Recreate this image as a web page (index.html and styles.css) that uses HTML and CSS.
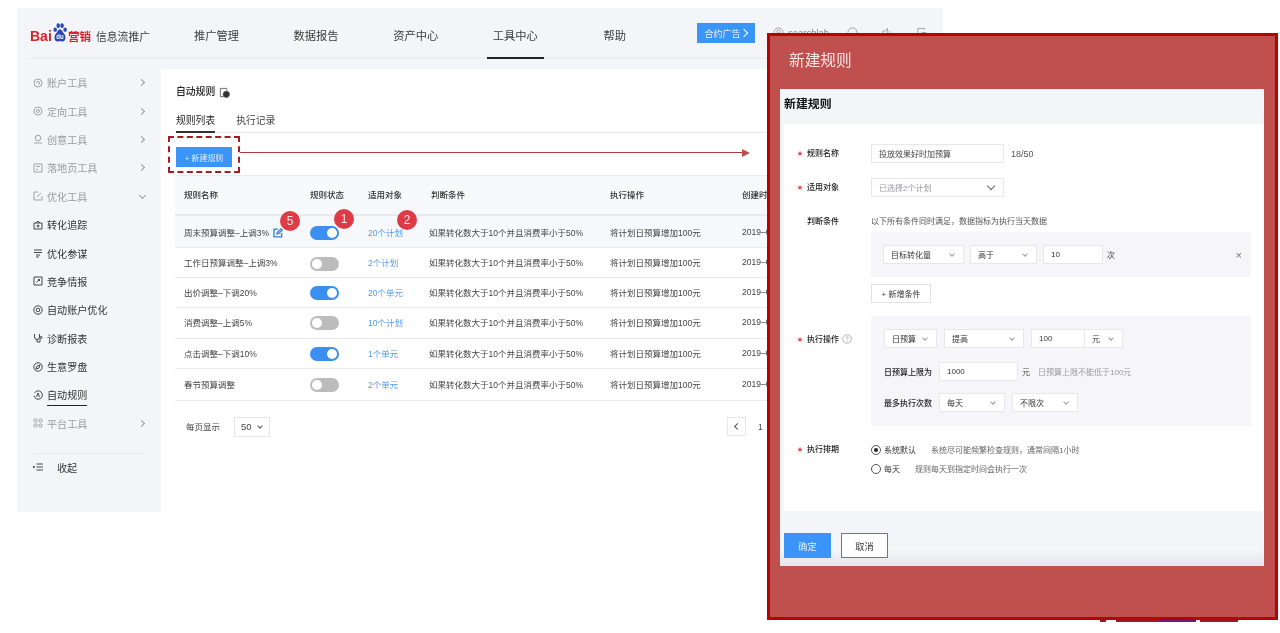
FILE: index.html
```html
<!DOCTYPE html>
<html lang="zh-CN">
<head>
<meta charset="utf-8">
<title>自动规则</title>
<link rel="stylesheet" href="styles.css">
</head>
<body>
<div class="app">
  <header class="topbar">
    <div class="logo">
      <span class="logo-bai">Bai</span>
      <svg class="logo-paw" viewBox="0 0 20 20" preserveAspectRatio="none"><ellipse cx="4" cy="7" rx="2.200" ry="2.300" fill="#2a46b8"/><ellipse cx="7.800" cy="2.800" rx="2.200" ry="2.500" fill="#2a46b8"/><ellipse cx="12.600" cy="2.800" rx="2.200" ry="2.500" fill="#2a46b8"/><ellipse cx="16.400" cy="7" rx="2.200" ry="2.300" fill="#2a46b8"/><path d="M10 6.500c-2.500 0-3 3-5 4.500C2.500 13 2 19.500 7 19.500c1.500 0 2-.5 3-.5s1.500.5 3 .5c5 0 4.500-6.500 2-8.500C13 9.500 12.500 6.500 10 6.500z" fill="#2a46b8"/><text x="10" y="17" class="logo-du">du</text></svg>
      <span class="logo-yx">营销</span>
      <span class="logo-name">信息流推广</span>
    </div>
    <nav class="nav">
      <a class="nav-item">推广管理</a>
      <a class="nav-item">数据报告</a>
      <a class="nav-item">资产中心</a>
      <a class="nav-item active">工具中心</a>
      <a class="nav-item help">帮助</a>
    </nav>
    <div class="top-right">
      <button class="contract">合约广告<i class="contract-arrow"></i></button>
      <svg class="top-icon user" viewBox="0 0 12 12"><circle cx="6" cy="6" r="5"/><circle cx="6" cy="5" r="1.800"/></svg>
      <span class="account">searchlab</span>
      <svg class="top-icon i1" viewBox="0 0 12 12"><circle cx="6" cy="6" r="5"/></svg>
      <svg class="top-icon i2" viewBox="0 0 12 12"><path d="M2 4.500h2l3-3v9l-3-3H2zM9 4c1 1 1 3 0 4"/></svg>
      <svg class="top-icon i3" viewBox="0 0 12 12"><path d="M9 3V1.500H2v9h7V9M6 6h5"/></svg>
    </div>
  </header>
  <div class="content">
    <aside class="side">
      <ul class="menu">
        <li class="mi muted"><svg class="ic" viewBox="0 0 10 10"><circle cx="5" cy="5" r="4"/><path d="M3.500 5a1.500 1.500 0 1 1 1.500 1.500"/></svg><span>账户工具</span><i class="chev"></i></li>
        <li class="mi muted"><svg class="ic" viewBox="0 0 10 10"><circle cx="5" cy="5" r="4"/><circle cx="5" cy="5" r="1.500"/></svg><span>定向工具</span><i class="chev"></i></li>
        <li class="mi muted"><svg class="ic" viewBox="0 0 10 10"><circle cx="5" cy="4" r="2.800"/><path d="M1 9h8"/></svg><span>创意工具</span><i class="chev"></i></li>
        <li class="mi muted"><svg class="ic" viewBox="0 0 10 10"><path d="M1 1h8v8H1zM3 3.500h4M3 6.500h2"/></svg><span>落地页工具</span><i class="chev"></i></li>
        <li class="mi muted"><svg class="ic" viewBox="0 0 10 10"><path d="M5 1H1v8h8V5M4 6l4-4"/></svg><span>优化工具</span><i class="chev down"></i></li>
        <li class="mi"><svg class="ic" viewBox="0 0 10 10"><path d="M1 3h8v6H1zM3 3l2-2 2 2M5 4.500v3M3.500 6h3"/></svg><span>转化追踪</span></li>
        <li class="mi"><svg class="ic" viewBox="0 0 10 10"><path d="M1 2h8M1 4.500h8M3 7h4M3 9h3"/></svg><span>优化参谋</span></li>
        <li class="mi"><svg class="ic" viewBox="0 0 10 10"><path d="M1 1h8v8H1zM3.500 6.500l3-3M5 3.500h1.500V5"/></svg><span>竞争情报</span></li>
        <li class="mi"><svg class="ic" viewBox="0 0 10 10"><circle cx="5" cy="5" r="4.200"/><circle cx="5" cy="5" r="1.800"/></svg><span>自动账户优化</span></li>
        <li class="mi"><svg class="ic" viewBox="0 0 10 10"><path d="M1.500 1v3a2.500 2.500 0 0 0 5 0V1M4 6.500V9h3V6"/><circle cx="8" cy="4.500" r="1"/></svg><span>诊断报表</span></li>
        <li class="mi"><svg class="ic" viewBox="0 0 10 10"><circle cx="5" cy="5" r="4.200"/><path d="M3 7l1-3 3-1-1 3z"/></svg><span>生意罗盘</span></li>
        <li class="mi current"><svg class="ic" viewBox="0 0 10 10"><path d="M1.500 3A4.200 4.200 0 1 1 1 5.500M3.500 7L5 3l1.500 4"/></svg><span>自动规则</span></li>
        <li class="mi muted"><svg class="ic" viewBox="0 0 10 10"><rect x="1" y="1" width="3" height="3" rx="1"/><rect x="6" y="1" width="3" height="3" rx="1"/><rect x="1" y="6" width="3" height="3" rx="1"/><rect x="6" y="6" width="3" height="3" rx="1"/></svg><span>平台工具</span><i class="chev"></i></li>
      </ul>
      <div class="collapse"><svg class="ic" viewBox="0 0 10 10"><path d="M3.500 2H10M3.500 5H10M3.500 8H10M0 5h2M1.200 4L0 5l1.200 1"/></svg><span>收起</span></div>
    </aside>
    <main class="main">
      <h1 class="page-title">自动规则<svg class="title-icon" viewBox="0 0 12 12"><path d="M6 10.500H1.500v-9h7V4"/><circle cx="8" cy="8" r="3.400" class="fill"/></svg></h1>
      <div class="tabs"><span class="tab on">规则列表</span><span class="tab">执行记录</span></div>
      <div class="toolbar">
        <button class="btn-new">+ 新建规则</button>
        <div class="dash"></div>
        <div class="arrow-line"></div>
        <div class="arrow-head"></div>
      </div>
      <div class="table">
        <div class="tr th"><div class="c1">规则名称</div><div class="c2">规则状态</div><div class="c3">适用对象</div><div class="c4">判断条件</div><div class="c5">执行操作</div><div class="c6">创建时间</div></div>
        <div class="tr hover"><div class="c1">周末预算调整–上调3%<svg class="edit" viewBox="0 0 10 10"><path d="M5 1.200H1v7.600h7.600V5M4 6l.3-1.500L8 .9l1.200 1.200L5.500 5.700z"/></svg></div><div class="c2"><i class="sw on"></i></div><div class="c3 link">20个计划</div><div class="c4">如果转化数大于10个并且消费率小于50%</div><div class="c5">将计划日预算增加100元</div><div class="c6">2019–06–01</div>
          <b class="badge b5">5</b><b class="badge b1">1</b><b class="badge b2">2</b></div>
        <div class="tr"><div class="c1">工作日预算调整–上调3%</div><div class="c2"><i class="sw"></i></div><div class="c3 link">2个计划</div><div class="c4">如果转化数大于10个并且消费率小于50%</div><div class="c5">将计划日预算增加100元</div><div class="c6">2019–06–01</div></div>
        <div class="tr"><div class="c1">出价调整–下调20%</div><div class="c2"><i class="sw on"></i></div><div class="c3 link">20个单元</div><div class="c4">如果转化数大于10个并且消费率小于50%</div><div class="c5">将计划日预算增加100元</div><div class="c6">2019–06–01</div></div>
        <div class="tr"><div class="c1">消费调整–上调5%</div><div class="c2"><i class="sw"></i></div><div class="c3 link">10个计划</div><div class="c4">如果转化数大于10个并且消费率小于50%</div><div class="c5">将计划日预算增加100元</div><div class="c6">2019–06–01</div></div>
        <div class="tr"><div class="c1">点击调整–下调10%</div><div class="c2"><i class="sw on"></i></div><div class="c3 link">1个单元</div><div class="c4">如果转化数大于10个并且消费率小于50%</div><div class="c5">将计划日预算增加100元</div><div class="c6">2019–06–01</div></div>
        <div class="tr"><div class="c1">春节预算调整</div><div class="c2"><i class="sw"></i></div><div class="c3 link">2个单元</div><div class="c4">如果转化数大于10个并且消费率小于50%</div><div class="c5">将计划日预算增加100元</div><div class="c6">2019–06–01</div></div>
      </div>
      <div class="pager">
        <span class="per">每页显示</span>
        <span class="per-sel">50<i class="mini-chev"></i></span>
        <span class="prev"><i class="prev-arrow"></i></span>
        <span class="page-no">1</span>
      </div>
    </main>
  </div>
</div>

<section class="panel">
  <h2 class="panel-title">新建规则</h2>
  <div class="sheet">
    <h3 class="sheet-title">新建规则</h3>
    <div class="form">
      <div class="row first">
        <label class="lab req">规则名称</label>
        <div class="val line"><span class="box w133 dark">投放效果好时加预算</span><span class="count">18/50</span></div>
      </div>
      <div class="row">
        <label class="lab req">适用对象</label>
        <div class="val line"><span class="box w133 ph">已选择2个计划<i class="sel-chev big"></i></span></div>
      </div>
      <div class="row">
        <label class="lab">判断条件</label>
        <div class="val">
          <div class="hint-line">以下所有条件同时满足，数据指标为执行当天数据</div>
          <div class="gray g1">
            <div class="line">
              <span class="box w81">目标转化量<i class="sel-chev"></i></span>
              <span class="box w67">高于<i class="sel-chev"></i></span>
              <span class="box w60">10</span>
              <span class="unit">次</span>
              <span class="close">×</span>
            </div>
          </div>
          <button class="btn-add">+ 新增条件</button>
          <div class="gray g2">
            <div class="line wide">
              <span class="box w53">日预算<i class="sel-chev"></i></span>
              <span class="box w80">提高<i class="sel-chev"></i></span>
              <span class="joined"><span class="box w53 nor">100</span><span class="box w39 nol">元<i class="sel-chev"></i></span></span>
            </div>
            <div class="line l2">
              <span class="sub-lab">日预算上限为</span>
              <span class="box w79">1000</span>
              <span class="unit">元</span>
              <span class="tip">日预算上限不能低于100元</span>
            </div>
            <div class="line l3 wide">
              <span class="sub-lab">最多执行次数</span>
              <span class="box w66">每天<i class="sel-chev"></i></span>
              <span class="box w66">不限次<i class="sel-chev"></i></span>
            </div>
          </div>
          <svg class="q-mark" viewBox="0 0 10 10"><circle cx="5" cy="5" r="4.300"/><path d="M3.800 4a1.200 1.200 0 1 1 1.700 1.100c-.4.200-.5.400-.5.900M5 7v.8"/></svg>
        </div>
        <label class="lab req exec">执行操作</label>
      </div>
      <div class="row sched">
        <label class="lab req">执行排期</label>
        <div class="val">
          <div class="radio-line"><i class="radio on"></i><span class="r-text">系统默认</span><span class="r-hint h1">系统尽可能频繁检查规则，通常间隔1小时</span></div>
          <div class="radio-line"><i class="radio"></i><span class="r-text">每天</span><span class="r-hint h2">规则每天到指定时间会执行一次</span></div>
        </div>
      </div>
    </div>
    <div class="foot">
      <button class="ok">确定</button>
      <button class="cancel">取消</button>
    </div>
  </div>
</section>
<div class="scrap"></div>
</body>
</html>
```

FILE: styles.css
```css
* { box-sizing: border-box; }
html, body { margin: 0; padding: 0; background: #fff; }
body {
  height: 633px;
  overflow: hidden;
  padding: 8px 0 0 17px;
  font-family: "Liberation Sans", "Noto Sans CJK SC", sans-serif;
  color: #444;
  position: relative;
}
ul { list-style: none; margin: 0; padding: 0; }
h1, h2, h3 { margin: 0; font-weight: 400; }
button { font-family: inherit; border: 0; padding: 0; }
i { display: block; font-style: normal; }

.app { width: 926px; height: 504px; background: #f4f5f9; overflow: hidden; display: flex; flex-direction: column; filter: blur(.3px); }

/* top bar */
.topbar { height: 51px; margin-left: 13px; display: flex; border-bottom: 2px solid #eceef2; flex: none; }
.logo { width: 158px; display: flex; align-items: center; height: 49px; padding-top: 6px; }
.logo-bai { color: #d9222a; font-weight: 700; font-size: 14px; width: 22px; }
.logo-paw { width: 16px; height: 19px; margin-top: -7px; flex: none; }
.logo-du { fill: #fff; font-size: 7.500px; font-weight: 700; text-anchor: middle; font-family: "Liberation Sans", sans-serif; }
.logo-yx { color: #d9222a; font-size: 11.500px; font-weight: 700; width: 23px; }
.logo-name { font-size: 10.800px; color: #3c3c3c; margin-left: 5px; white-space: nowrap; }
.nav { display: flex; gap: 42.600px; }
.nav-item { height: 51px; line-height: 56px; padding: 0 6px; font-size: 11.250px; color: #3c3c3c; white-space: nowrap; border-bottom: 2px solid transparent; }
.nav-item.active { border-bottom-color: #222; }
.nav-item.help { margin-left: 11px; }
.top-right { display: flex; align-items: flex-start; padding-top: 15px; margin-left: 65px; }
.contract { width: 58px; height: 20px; background: #3b95f9; color: #e6f1fe; font-size: 9px; display: flex; align-items: center; justify-content: center; gap: 1px; }
.contract-arrow { width: 6px; height: 6px; border-top: 1.500px solid #fff; border-right: 1.500px solid #fff; transform: rotate(45deg); }
.top-icon { width: 11px; height: 11px; fill: none; stroke: #888; stroke-width: .8; margin-top: 4px; }
.top-icon.user { margin-left: 18px; }
.account { font-size: 9.500px; color: #888; margin: 4px 0 0 4px; width: 59px; }
.top-icon.i2 { margin-left: 23px; }
.top-icon.i3 { margin-left: 24px; }

.content { display: flex; flex: 1; min-height: 0; }

/* sidebar */
.side { width: 144px; flex: none; padding: 9.500px 15px 0 16px; }
.mi { height: 28.400px; display: flex; align-items: center; font-size: 10.100px; color: #333; position: relative; }
.mi.muted { color: #999a9d; }
.ic { width: 10px; height: 10px; margin-right: 4px; fill: none; stroke: currentColor; stroke-width: .9; flex: none; }
.chev { width: 5px; height: 5px; border-top: 1px solid #999; border-right: 1px solid #999; transform: rotate(45deg); margin-left: auto; margin-right: 2px; }
.chev.down { transform: rotate(135deg); margin-right: 1px; margin-top: -2px; }
.mi.current span { display: block; line-height: 14px; border-bottom: 1.500px solid #222; margin-bottom: -5px; padding-bottom: 2px; }
.collapse { border-top: 1px solid #e8e9ed; margin: 15px 0 0 0; height: 28px; display: flex; align-items: center; font-size: 10.100px; color: #333; }
.collapse .ic { margin-right: 14px; }

/* main */
.main { flex: 1; background: #fff; margin-top: 10px; min-width: 0; padding: 0 0 0 15px; }
.page-title { font-size: 9.800px; font-weight: 500; color: #222; height: 18px; line-height: 18px; margin-top: 14px; display: flex; align-items: center; }
.title-icon { width: 11px; height: 11px; margin-left: 4px; fill: none; stroke: #444; stroke-width: .8; }
.title-icon .fill { fill: #333; }
.tabs { display: flex; gap: 21px; height: 21px; margin-top: 11px; border-bottom: 1px solid #e6e7ea; margin-left: -1px; padding-left: 1px; }
.tab { font-size: 9.800px; color: #444; height: 21px; line-height: 18px; }
.tab.on { color: #222; border-bottom: 2px solid #333; }
.toolbar { position: relative; height: 42px; padding-top: 14px; }
.btn-new { display: block; width: 56px; height: 20px; background: #3b95f9; color: #e0eefe; font-size: 7.900px; }
.dash { position: absolute; left: -8px; top: 3px; width: 72px; height: 37px; border: 2px dashed #a51c24; }
.arrow-line { position: absolute; left: 64px; top: 19px; width: 506px; height: 1px; background: #a83a3a; }
.arrow-head { position: absolute; left: 566px; top: 16px; width: 0; height: 0; border-left: 8px solid #c0504d; border-top: 4px solid transparent; border-bottom: 4px solid transparent; }

/* table */
.table { position: relative; width: 750px; margin-left: -1px; border-top: 1px solid #e9eaed; }
.tr { display: flex; align-items: center; font-size: 8.500px; color: #444; border-bottom: 1px solid #e9eaed; position: relative; white-space: nowrap; }
.tr > div { flex: none; }
.tr > .c1, .tr > .c3, .tr > .c4, .tr > .c5, .tr > .c6 { margin-top: -2px; }
.c1 { width: 135px; padding-left: 9px; display: flex; align-items: center; }
.c2 { width: 58px; }
.c3 { width: 61px; }
.c4 { width: 181px; }
.c5 { width: 132px; }
.c6 { width: 100px; }
.th { height: 40px; background: #f8f9fa; font-weight: 500; color: #333; border-bottom-width: 2px; }
.th .c2 { margin-top: -2px; }
.th .c4 { position: relative; left: 2px; }
.tr:nth-child(2) { height: 32px; padding-top: 2px; background: #f7f8fb; }
.tr:nth-child(3), .tr:nth-child(4) { height: 30px; }
.tr:nth-child(3) .sw { margin-top: 3px; }
.tr:nth-child(5) { height: 31px; }
.tr:nth-child(6) { height: 30px; }
.tr:nth-child(7) { height: 32px; }
.link { color: #4f9cec; }
.edit { width: 10px; height: 10px; margin: 2px 0 0 4px; fill: none; stroke: #2f7fd8; stroke-width: 1.300; }
.sw { width: 29px; height: 14px; border-radius: 7px; background: #bcbcbc; position: relative; }
.sw::after { content: ""; position: absolute; left: 2px; top: 2px; width: 10px; height: 10px; border-radius: 50%; background: #fff; }
.sw.on { background: #3b8ff0; }
.sw.on::after { left: 17px; }
.badge { position: absolute; width: 20px; height: 20px; border-radius: 50%; background: #df3b47; color: #fbe3e4; font-size: 12px; font-weight: 400; line-height: 20px; text-align: center; }
.b5 { left: 105px; top: -5px; }
.b1 { left: 159px; top: -7px; }
.b2 { left: 222px; top: -6px; }

.pager { display: flex; align-items: center; height: 19px; margin-top: 16px; font-size: 8.500px; color: #444; padding-left: 10px; }
.per { width: 48px; margin-top: -2px; }
.per-sel { width: 36px; height: 20px; border: 1px solid #e5e6e9; display: flex; align-items: center; padding-left: 6px; font-size: 9.500px; gap: 6px; color: #444; }
.mini-chev { width: 4px; height: 4px; border-right: 1px solid #555; border-bottom: 1px solid #555; transform: rotate(45deg); margin-top: -2px; }
.prev { margin-left: 457px; width: 19px; height: 19px; border: 1px solid #e5e6e9; display: flex; align-items: center; justify-content: center; }
.prev-arrow { width: 5px; height: 5px; border-left: 1px solid #555; border-bottom: 1px solid #555; transform: rotate(45deg); margin-left: 2px; }
.page-no { margin-left: 12px; }

/* overlay panel */
.panel { position: absolute; left: 767px; top: 33px; width: 511px; height: 587px; background: #c0504d; border: 3px solid #b40404; padding: 0 11px 0 10px; }
.panel-title { height: 53px; line-height: 50px; padding-left: 9px; font-size: 15.700px; color: #fae6e5; filter: blur(.3px); }
.sheet { height: 477px; background: #f4f5f9; display: flex; flex-direction: column; filter: blur(.3px); }
.sheet-title { height: 35px; line-height: 30px; padding-left: 4px; font-size: 11.900px; font-weight: 700; color: #111; flex: none; }
.form { height: 387px; margin-left: 4px; background: #fff; padding: 20px 14px 0 13px; font-size: 8px; color: #333; flex: none; }
.row { display: flex; position: relative; margin-top: 15px; }
.row.first { margin-top: 0; }
.lab { width: 74px; height: 19px; line-height: 19px; padding-left: 10px; position: relative; font-weight: 500; color: #222; flex: none; }
.req::before { content: "★"; position: absolute; left: 0; top: 0; color: #d9434b; font-size: 6px; }
.exec { position: absolute; left: 0; top: 118px; }
.val { flex: 1; min-width: 0; }
.line { display: flex; align-items: center; gap: 6px; }
.line.wide { gap: 7px; }
.box { height: 19px; border: 1px solid #e7e8eb; background: #fff; display: flex; align-items: center; padding: 0 7px; position: relative; color: #333; white-space: nowrap; flex: none; }
.w133 { width: 133px; }
.w81 { width: 81px; }
.w67 { width: 67px; }
.w60 { width: 60px; }
.w53 { width: 53px; }
.w80 { width: 80px; }
.w39 { width: 39px; }
.w79 { width: 79px; }
.w66 { width: 66px; }
.ph { color: #9a9b9e; }
.dark { color: #444; }
.count { margin-left: 1px; color: #555; font-size: 9px; }
.sel-chev { position: absolute; right: 9px; top: 6px; width: 4px; height: 4px; border-right: 1px solid #999; border-bottom: 1px solid #999; transform: rotate(45deg); }
.sel-chev.big { right: 9px; top: 4px; width: 6px; height: 6px; border-color: #666; }
.hint-line { height: 20px; line-height: 20px; color: #555; }
.gray { background: #f6f6f8; }
.g1 { height: 45px; padding: 13px 0 0 12px; width: 380px; }
.g2 { height: 110px; padding: 13px 0 0 13px; margin-top: 13px; width: 380px; }
.unit { margin-left: -2px; color: #444; }
.close { margin-left: auto; margin-right: 9px; font-size: 11px; color: #777; }
.btn-add { display: block; width: 60px; height: 19px; margin-top: 7px; background: #fff; border: 1px solid #e2e3e6; font-size: 8px; color: #333; }
.joined { display: flex; }
.nor { border-right: 0; }
.l2 { margin-top: 14px; }
.l3 { margin-top: 12px; }
.l3 .sub-lab { margin-right: -1px; }
.sub-lab { width: 49px; font-weight: 500; color: #222; white-space: nowrap; }
.tip { color: #9a9b9e; margin-left: 2px; white-space: nowrap; }
.q-mark { position: absolute; left: 45px; top: 122px; width: 10px; height: 10px; fill: none; stroke: #999; stroke-width: .7; }
.sched { margin-top: 14px; }
.radio-line { height: 19px; display: flex; align-items: center; color: #444; }
.radio { width: 10px; height: 10px; border: 1px solid #555; border-radius: 50%; position: relative; flex: none; margin-right: 3px; }
.radio.on::after { content: ""; position: absolute; left: 2px; top: 2px; width: 4px; height: 4px; border-radius: 50%; background: #222; }
.r-text { color: #333; }
.r-hint { color: #666; white-space: nowrap; }
.h1 { margin-left: 15px; }
.h2 { margin-left: 15px; }
.foot { flex: 1; padding: 22px 0 0 4px; display: flex; gap: 10px; background: linear-gradient(#f4f5f9 70%, #e4e5ea); align-items: flex-start; }
.ok, .cancel { height: 25px; font-size: 9.200px; }
.ok { width: 47px; background: #3b95f9; color: #e0eefe; }
.cancel { width: 47px; background: #fff; border: 1px solid #777; color: #333; }

.scrap { position: absolute; left: 1100px; top: 620px; width: 138px; height: 2px; background: linear-gradient(90deg, #a01820 0 6px, transparent 6px 16px, #a01820 16px 60px, #6a1a80 60px 96px, transparent 96px 100px, #a01820 100px 138px); }
```
